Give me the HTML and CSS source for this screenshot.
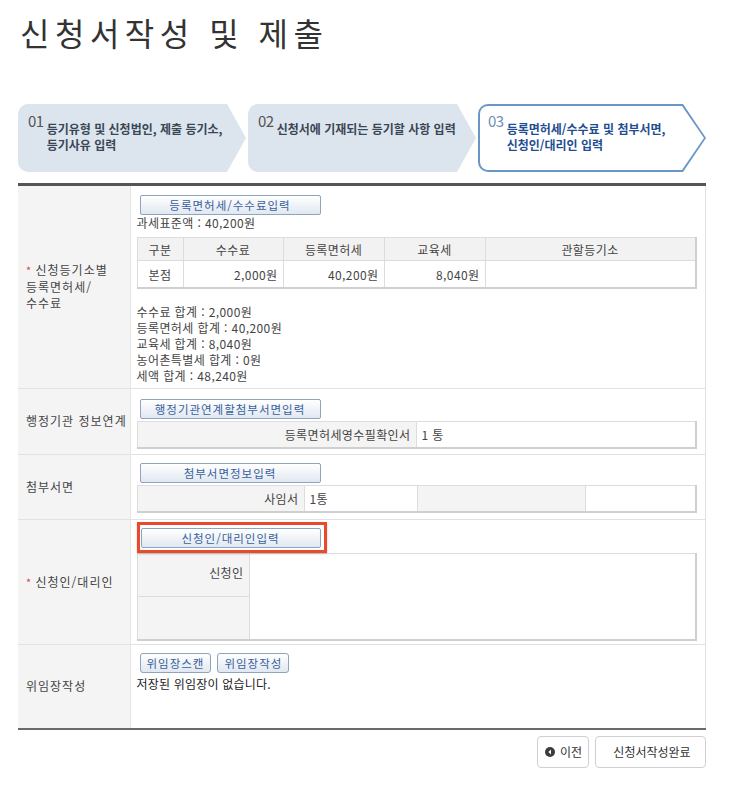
FILE: index.html
```html
<!DOCTYPE html>
<html lang="ko">
<head>
    <meta charset="UTF-8">
    <title>신청서작성 및 제출</title>
    <link rel="stylesheet" href="styles.css">
</head>
<body>
<div class="page">
    <h1 class="title">신청서작성 및 제출</h1>

    <ol class="steps">
        <li class="step">
            <span class="num">01</span>
            <span class="txt">등기유형 및 신청법인, 제출 등기소,<br>등기사유 입력</span>
        </li>
        <li class="step">
            <span class="num">02</span>
            <span class="txt">신청서에 기재되는 등기할 사항 입력</span>
        </li>
        <li class="step current">
            <div class="step-in">
                <span class="num">03</span>
                <span class="txt">등록면허세/수수료 및 첨부서면,<br>신청인/대리인 입력</span>
            </div>
        </li>
    </ol>

    <table class="form">
        <tr class="row-fee">
            <th><span class="req">*</span> 신청등기소별<br>등록면허세/<br>수수료</th>
            <td>
                <button class="btn">등록면허세/수수료입력</button>
                <p class="line">과세표준액 : 40,200원</p>
                <table class="grid fee">
                    <colgroup>
                        <col class="c1"><col class="c2"><col class="c3"><col class="c4"><col>
                    </colgroup>
                    <tr>
                        <th>구분</th>
                        <th>수수료</th>
                        <th>등록면허세</th>
                        <th>교육세</th>
                        <th>관할등기소</th>
                    </tr>
                    <tr>
                        <td class="center">본점</td>
                        <td class="num">2,000원</td>
                        <td class="num">40,200원</td>
                        <td class="num">8,040원</td>
                        <td></td>
                    </tr>
                </table>
                <div class="sums">
                    수수료 합계 : 2,000원<br>
                    등록면허세 합계 : 40,200원<br>
                    교육세 합계 : 8,040원<br>
                    농어촌특별세 합계 : 0원<br>
                    세액 합계 : 48,240원
                </div>
            </td>
        </tr>
        <tr class="row-link">
            <th>행정기관 정보연계</th>
            <td>
                <button class="btn">행정기관연계할첨부서면입력</button>
                <table class="grid doc">
                    <colgroup><col class="w-link"><col></colgroup>
                    <tr>
                        <td class="gray right">등록면허세영수필확인서</td>
                        <td>1 통</td>
                    </tr>
                </table>
            </td>
        </tr>
        <tr class="row-attach">
            <th>첨부서면</th>
            <td>
                <button class="btn">첨부서면정보입력</button>
                <table class="grid doc">
                    <colgroup><col class="w-a1"><col class="w-a2"><col class="w-a3"><col></colgroup>
                    <tr>
                        <td class="gray right">사임서</td>
                        <td>1통</td>
                        <td class="gray"></td>
                        <td></td>
                    </tr>
                </table>
            </td>
        </tr>
        <tr class="row-person">
            <th><span class="req">*</span> 신청인/대리인</th>
            <td>
                <div class="focus"><button class="btn">신청인/대리인입력</button></div>
                <table class="grid person">
                    <colgroup><col class="w-p1"><col></colgroup>
                    <tr class="p-top">
                        <td class="gray right top">신청인</td>
                        <td rowspan="2"></td>
                    </tr>
                    <tr class="p-bottom">
                        <td class="gray"></td>
                    </tr>
                </table>
            </td>
        </tr>
        <tr class="row-proxy">
            <th>위임장작성</th>
            <td>
                <div class="btns">
                    <button class="btn small">위임장스캔</button>
                    <button class="btn small">위임장작성</button>
                </div>
                <p class="line dark">저장된 위임장이 없습니다.</p>
            </td>
        </tr>
    </table>

    <div class="actions">
        <button class="act prev">
            <svg width="10" height="10" viewBox="0 0 10 10"><circle cx="5" cy="5" r="5" fill="#3c3c3c"/><path d="M6 2.6 3.4 5 6 7.4z" fill="#fff"/></svg>
            이전
        </button>
        <button class="act done">신청서작성완료</button>
    </div>
</div>
</body>
</html>
```

FILE: styles.css
```css
body{
    margin: 0;
    background: #fff;
    color: #444;
    font-family: "Noto Sans CJK KR", "Noto Sans", sans-serif;
}

.page{
    width: 688px;
    padding-left: 18px;
}

.title{
    margin: 0 0 52px;
    padding: 12px 0 0 2px;
    font-size: 32px;
    line-height: 40px;
    font-weight: 400;
    letter-spacing: 5.5px;
    color: #333;
}

/* 단계 표시 */
.steps{
    list-style: none;
    margin: 0 0 11px;
    padding: 0;
    display: flex;
    gap: 2px;
}

.step{
    width: 228px;
    height: 68px;
    box-sizing: border-box;
    padding: 8px 20px 0 10px;
    display: flex;
    align-items: flex-start;
    background: #dce5ed;
    border-radius: 10px 0 0 10px;
    clip-path: polygon(0 0, calc(100% - 19px) 0, 100% 50%, calc(100% - 19px) 100%, 0 100%);
}

.step .num{
    font-size: 15px;
    line-height: 18px;
    color: #555;
    margin-right: 3px;
    letter-spacing: -0.5px;
}

.step .txt{
    margin-top: 9px;
    font-size: 12px;
    line-height: 16px;
    font-weight: 700;
    color: #3a4656;
    white-space: nowrap;
}

.step.current{
    padding: 2px;
    background: #6a96c6;
    clip-path: polygon(0 0, calc(100% - 23px) 0, 100% 50%, calc(100% - 23px) 100%, 0 100%);
}

.step-in{
    flex: 1;
    height: 100%;
    box-sizing: border-box;
    padding: 6px 20px 0 8px;
    display: flex;
    align-items: flex-start;
    background: #fff;
    border-radius: 8px 0 0 8px;
    clip-path: polygon(0 0, calc(100% - 22px) 0, 100% 50%, calc(100% - 22px) 100%, 0 100%);
}

.current .num{
    color: #6f90b8;
}

.current .txt{
    color: #1f4e91;
}

/* 입력 표 */
.form{
    width: 688px;
    border-collapse: collapse;
    border-top: 3px solid #555;
    border-bottom: 2px solid #6a6a6a;
    border-right: 1px solid #e2e2e2;
    font-size: 12px;
    letter-spacing: 0.4px;
}

.form > tbody > tr > th{
    width: 112px;
    box-sizing: border-box;
    padding: 0 2px 0 8px;
    background: #f4f4f4;
    border-right: 1px solid #e6e6e6;
    text-align: left;
    font-weight: 400;
    font-size: 12px;
    letter-spacing: 1px;
    line-height: 16.5px;
    color: #444;
    vertical-align: middle;
}

.form > tbody > tr > td{
    padding: 0 8px 0 6px;
    vertical-align: top;
    color: #444;
}

.form > tbody > tr + tr > th,
.form > tbody > tr + tr > td{
    border-top: 1px solid #e2e2e2;
}

.req{
    color: #d24a4a;
    font-size: 11px;
    letter-spacing: 0;
}

.row-fee{ height: 204px; }
.row-fee > td{ padding-top: 9px !important; }
.row-link{ height: 66px; }
.row-link > td{ padding-top: 10px !important; }
.row-attach{ height: 65px; }
.row-attach > td{ padding-top: 8px !important; }
.row-person{ height: 125px; }
.row-person > td{ padding-top: 2px !important; }
.row-proxy{ height: 84px; }
.row-proxy > td{ padding-top: 8px !important; }

.btn{
    display: block;
    width: 181px;
    height: 20px;
    margin-left: 3px;
    padding: 0;
    border: 1px solid #8ea4bf;
    border-radius: 2px;
    background: linear-gradient(#ffffff, #e1e8f1);
    color: #36609c;
    font-family: inherit;
    font-size: 11.5px;
    line-height: 18px;
    letter-spacing: 1px;
}

.btn.small{
    display: inline-block;
    width: auto;
    padding: 0 6px;
    margin-left: 0;
    border-radius: 3px;
    font-size: 11.5px;
}

.btns{
    display: flex;
    gap: 6px;
    margin-left: 3px;
}

.line{
    margin: 0;
    line-height: 16px;
}

.line.dark{
    margin-top: 3px;
    color: #222;
    letter-spacing: 0.2px;
}

.focus{
    display: inline-block;
    padding: 3px 3px 2px 1px;
    border: 3px solid #e94a2c;
    box-shadow: 0 1px 2px rgba(0,0,0,0.2);
}

.focus .btn{
    width: 180px;
    margin-left: 0;
}

.grid{
    width: 560px;
    table-layout: fixed;
    border-collapse: collapse;
    border-top: 1px solid #d2d2d2;
    border-left: 1px solid #d2d2d2;
    border-right: 2px solid #cfcfcf;
    border-bottom: 2px solid #cfcfcf;
}

.grid th,
.grid td{
    border: 1px solid #dcdcdc;
    padding: 0 5px;
    font-weight: 400;
    color: #444;
    white-space: nowrap;
}

.fee{
    margin-top: 6px;
}

.fee th{
    height: 22px;
    background: #f2f2f2;
    font-size: 12px;
}

.fee td{
    height: 26px;
}

.c1{ width: 46px; }
.c2{ width: 100px; }
.c3{ width: 101px; }
.c4{ width: 101px; }

.center{ text-align: center; }
.num{ text-align: right; }
.right{ text-align: right; }
.top{ vertical-align: top; padding-top: 10px !important; line-height: 17px; }

.gray{ background: #f4f4f4; }

.sums{
    margin-top: 15px;
    line-height: 16px;
}

.doc{
    margin-top: 2px;
}

.doc td{
    height: 25px;
    font-size: 12px;
}

.w-link{ width: 279px; }
.w-a1{ width: 167px; }
.w-a2{ width: 113px; }
.w-a3{ width: 168px; }
.w-p1{ width: 112px; }

.person td{
    font-size: 12px;
    padding-top: 0;
    padding-bottom: 0;
}

.person .p-top{ height: 43px; }
.person .p-bottom{ height: 43px; }

/* 하단 버튼 */
.actions{
    display: flex;
    justify-content: flex-end;
    gap: 6px;
    margin-top: 6px;
}

.act{
    height: 32px;
    padding: 0 6px 0 9px;
    border: 1px solid #cfcfcf;
    border-radius: 4px;
    background: #fff;
    color: #333;
    font-family: inherit;
    font-size: 12px;
    display: flex;
    align-items: center;
    gap: 5px;
}

.act.prev{
    padding-left: 7px;
}

.act.done{
    width: 111px;
    justify-content: center;
}
```
